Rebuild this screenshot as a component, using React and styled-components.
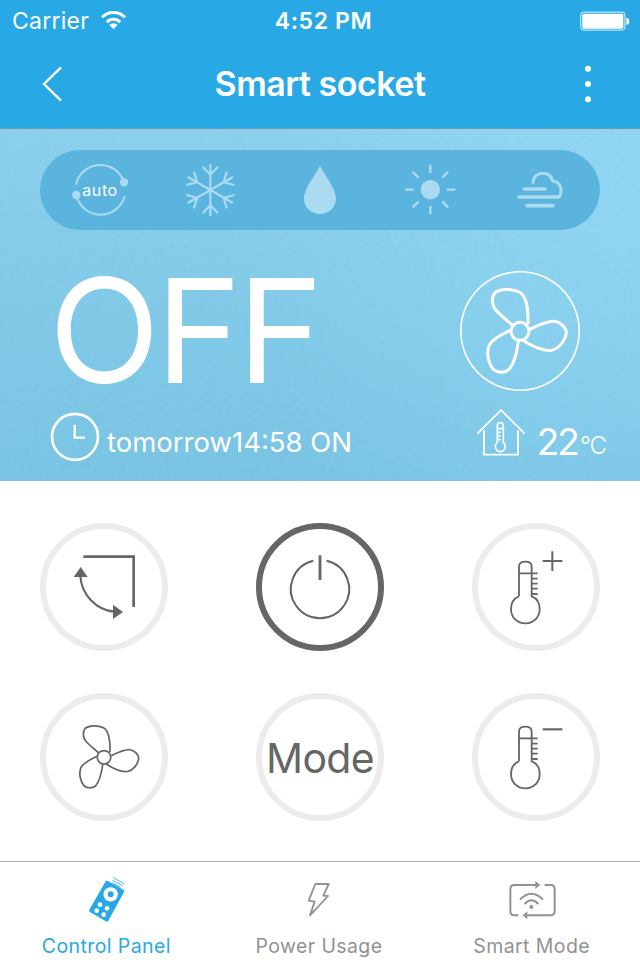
import React, { useState } from 'react';
import styled, { createGlobalStyle, ThemeProvider } from 'styled-components';

const theme = {
  blue: '#28a9e6',
  pill: '#5ab4de',
  pale: '#abdbf0',
  dark: '#666666',
  ring: '#ececec',
  gray: '#929292',
  white: '#ffffff',
};

const MODES = ['auto', 'cool', 'dry', 'heat', 'wind'];

const TABS = [
  { id: 'panel', label: 'Control Panel' },
  { id: 'usage', label: 'Power Usage' },
  { id: 'smart', label: 'Smart Mode' },
];

const FAN_BLADES =
  'M264 190 C265 140 260 105 238 93 C215 82 180 83 165 95 C154 108 155 135 168 148 C182 162 200 178 217 192 M269 205 C295 192 325 180 345 181 C364 185 379 202 379 215 C376 240 355 264 335 268 C305 272 270 252 248 238 M214 206 C180 222 155 238 148 252 C138 275 145 308 161 326 C173 336 195 336 206 326 C225 305 230 275 235 240';

const Fan = ({ size, stroke }) => (
  <Icon $size={size} viewBox="60 30 360 360" $stroke={stroke}>
    <path d={FAN_BLADES} />
    <circle cx="240" cy="211" r="27" />
  </Icon>
);

const ModeIcon = ({ type }) => {
  switch (type) {
    case 'auto':
      return (
        <Icon $size={60} viewBox="120 60 180 180" $stroke={6}>
          <path d="M138 134 A74.5 74.5 0 0 1 282 127 M139 165 A74.5 74.5 0 0 0 284 168" />
          <circle className="fill" cx="282" cy="127" r="12.5" />
          <circle className="fill" cx="139" cy="165" r="12.5" />
        </Icon>
      );
    case 'cool':
      return (
        <Icon $size={60} viewBox="450 60 180 180" $stroke={6.5}>
          {[0, 60, 120, 180, 240, 300].map(deg => (
            <path
              key={deg}
              transform={`rotate(${deg} 541 150)`}
              d="M541 150 V72 M518 80 L541 104 L564 80"
            />
          ))}
        </Icon>
      );
    case 'dry':
      return (
        <Icon $size={60} viewBox="780 60 180 180" $stroke={0}>
          <path
            className="fill"
            d="M870 77 C857 103 822 147 822 175 C822 203 843 222 870 222 C897 222 918 203 918 175 C918 147 883 103 870 77Z"
          />
        </Icon>
      );
    case 'heat':
      return (
        <Icon $size={60} viewBox="240 60 180 180" $stroke={7}>
          <circle className="fill" cx="331" cy="149" r="29" />
          <path d="M331 74 V99 M331 198 V223 M256 149 H281 M381 149 H406 M278 96 L296 113 M384 96 L367 113 M278 202 L296 184 M384 202 L367 184" />
        </Icon>
      );
    default:
      return (
        <Icon $size={60} viewBox="570 60 180 180" $stroke={11} $round>
          <path d="M613 147 H675 M597 171 H716 M621 197 H699" />
          <path
            strokeWidth="9"
            d="M639 128 C640 109 653 100 669 100 C685 100 695 110 698 123 C718 125 725 141 723 155 C722 166 719 171 714 171"
          />
        </Icon>
      );
  }
};

const Thermometer = ({ sign }) => (
  <Icon $size={116} viewBox={sign === '+' ? '39 41 348 348' : '39 56 348 348'} $stroke={5.5}>
    <path d="M162 243 V154 C162 144 170 139 181 139 C192 139 200 144 200 154 V243 C216 249 224 264 224 281 C224 307 205 324 181 324 C157 324 138 307 138 281 C138 264 147 249 162 243 M162 174 H218 M200 190 H218 M200 205 H218 M200 220 H218 M200 236 H218" />
    {sign === '+' ? (
      <path strokeWidth="6" d="M233 137 H292 M262 108 V167" />
    ) : (
      <path strokeWidth="6.5" d="M233 147 H292" />
    )}
  </Icon>
);

const Swing = () => (
  <Icon $size={116} viewBox="48 41 348 348" $stroke={8}>
    <path d="M160 124 H311 V275" />
    <path strokeWidth="6.5" d="M151 182 C155 240 200 285 252 289" />
    <path className="fill" strokeWidth="0" d="M152 155 L173 185 H131Z M279 290 L249 268 V311Z" />
  </Icon>
);

const Power = () => (
  <Icon $size={116} viewBox="51 41 348 348" $stroke={6}>
    <path d="M205 136 A87.5 87.5 0 1 0 245 136" />
    <path strokeWidth="8.5" d="M225 120 V194" />
  </Icon>
);

const TabIcon = ({ type }) => {
  if (type === 'panel') {
    return (
      <Icon $size={48} viewBox="247 63 144 144" $stroke={0}>
        <path
          className="fill"
          d="M318 79 Q321 76 325 78 L371 104 Q375 107 373 111 L326 197 Q323 202 318 199 L271 171 Q267 168 269 164Z"
        />
        <circle fill="#fff" cx="333" cy="118" r="21.5" />
        <circle className="fill" cx="333" cy="118" r="9" />
        <circle fill="#fff" cx="301" cy="149" r="7" />
        <circle fill="#fff" cx="322" cy="160" r="7" />
        <circle fill="#fff" cx="291" cy="167" r="7" />
        <circle fill="#fff" cx="312" cy="179" r="7" />
        <path strokeWidth="2.5" d="M339 67 L375 87 M339 76 L369 92 M339 84 L363 97" />
      </Icon>
    );
  }
  if (type === 'usage') {
    return (
      <Icon $size={48} viewBox="885 63 144 144" $stroke={5.5} $round>
        <path d="M946 87 H986 L970 122 L984 123 L930 181 L944 140 L926 137Z" />
      </Icon>
    );
  }
  return (
    <Icon $size={48} viewBox="563 63 144 144" $stroke={6}>
      <path d="M647 90 H582 Q570 90 570 102 V169 Q570 181 582 181 H594 M673 90 H691 Q703 90 703 102 V169 Q703 181 691 181 H618" />
      <path className="fill" strokeWidth="0" d="M645 78 L660 90 L645 102Z M621 169 L607 181 L621 193Z" />
      <path d="M599 134 Q633 99 668 134 M613 147 Q633 125 654 147" />
      <circle className="fill" strokeWidth="0" cx="633" cy="156" r="6" />
    </Icon>
  );
};

const StatusBar = () => (
  <Status>
    <Carrier>
      Carrier
      <Wifi viewBox="298 30 80 60">
        <path d="M303.7 51.7 A48.5 48.5 0 0 1 372.3 51.7 M318.2 66.2 A28 28 0 0 1 357.8 66.2" />
        <path className="wedge" d="M338 87 L325.5 75 A17 17 0 0 1 350.5 75Z" />
      </Wifi>
    </Carrier>
    <Time>4:52 PM</Time>
    <Battery viewBox="779 31 150 60">
      <rect x="781.3" y="34.3" width="132.4" height="54" rx="8" fill="none" stroke="#fff" strokeWidth="2.6" />
      <rect x="786" y="39" width="123" height="45" rx="4" />
      <path d="M918 51 Q927 52 927 62 Q927 72 918 73Z" />
    </Battery>
  </Status>
);

export default function App() {
  const [tab, setTab] = useState('panel');

  return (
    <ThemeProvider theme={theme}>
      <GlobalStyle />
      <Screen>
        <Header>
          <StatusBar />
          <Nav>
            <NavButton aria-label="Back">
              <Icon $size={40} viewBox="97 192 120 120" $stroke={7}>
                <path d="M184 202 L133 252 L184 302" />
              </Icon>
            </NavButton>
            <Title>Smart socket</Title>
            <NavButton aria-label="More">
              <Icon $size={40} viewBox="744 192 120 120" $stroke={0}>
                <circle className="fill" cx="804" cy="206" r="9" />
                <circle className="fill" cx="804" cy="252" r="9" />
                <circle className="fill" cx="804" cy="298" r="9" />
              </Icon>
            </NavButton>
          </Nav>
        </Header>

        <Hero>
          <Grain aria-hidden="true">
            <filter id="grain">
              <feTurbulence type="fractalNoise" baseFrequency="0.2" numOctaves="2" seed="4" />
              <feColorMatrix values="0 0 0 0 1  0 0 0 0 1  0 0 0 0 1  1.4 0 0 0 -0.5" />
            </filter>
            <rect width="100%" height="100%" filter="url(#grain)" />
          </Grain>
          <ModeBar>
            {MODES.map(mode => (
              <ModeCell key={mode}>
                <ModeIcon type={mode} />
                {mode === 'auto' && <AutoText>auto</AutoText>}
              </ModeCell>
            ))}
          </ModeBar>
          <StateRow>
            <State>OFF</State>
            <FanRing>
              <Fan size={120} stroke={9} />
            </FanRing>
          </StateRow>
          <InfoRow>
            <Timer>
              <Icon $size={50} viewBox="60 485 150 150" $stroke={8}>
                <circle cx="135" cy="559.5" r="69" />
                <path strokeWidth="7" d="M134 523 V562 H165" />
              </Icon>
              <TimerText>tomorrow14:58 ON</TimerText>
            </Timer>
            <Room>
              <Icon $size={50} viewBox="105 440 150 150" $stroke={5.5}>
                <path d="M109 520 L180 449 L251 520 M129 510 V583 H231 V510" />
                <path
                  strokeWidth="5"
                  d="M169 547 V496 Q169 487 178 487 Q187 487 187 496 V547 A15 15 0 1 1 169 547 M169 505 H187 M171 516 H179 M171 527 H179 M171 538 H179"
                />
              </Icon>
              <Degrees>22</Degrees>
              <Unit>°C</Unit>
            </Room>
          </InfoRow>
        </Hero>

        <Pad>
          <Key aria-label="Swing"><Swing /></Key>
          <Key aria-label="Power" $active><Power /></Key>
          <Key aria-label="Warmer"><Thermometer sign="+" /></Key>
          <Key aria-label="Fan speed"><Fan size={90} stroke={7} /></Key>
          <Key><KeyText>Mode</KeyText></Key>
          <Key aria-label="Cooler"><Thermometer sign="-" /></Key>
        </Pad>

        <TabBar>
          {TABS.map(({ id, label }) => (
            <Tab key={id} $active={tab === id} onClick={() => setTab(id)}>
              <TabIcon type={id} />
              <TabLabel>{label}</TabLabel>
            </Tab>
          ))}
        </TabBar>
      </Screen>
    </ThemeProvider>
  );
}

const GlobalStyle = createGlobalStyle`
  * {
    box-sizing: border-box;
  }
  body {
    margin: 0;
    background: #fff;
    font-family: Inter, 'Liberation Sans', sans-serif;
  }
  button {
    padding: 0;
    border: 0;
    background: none;
    color: inherit;
    font: inherit;
  }
`;

const Screen = styled.div`
  display: flex;
  flex-direction: column;
  width: 640px;
  height: 960px;
  overflow: hidden;
  white-space: nowrap;
`;

const Icon = styled.svg`
  flex: none;
  display: block;
  width: ${({ $size }) => $size}px;
  height: ${({ $size }) => $size}px;
  overflow: visible;
  fill: none;
  stroke: currentColor;
  stroke-width: ${({ $stroke }) => $stroke};
  stroke-linecap: ${({ $round }) => ($round ? 'round' : 'butt')};
  stroke-linejoin: ${({ $round }) => ($round ? 'round' : 'miter')};
  .fill {
    fill: currentColor;
    stroke: none;
  }
`;

const Header = styled.header`
  height: 129px;
  border-bottom: 1px solid #6b9cb3;
  background: ${({ theme }) => theme.blue};
  color: ${({ theme }) => theme.white};
`;

const Status = styled.div`
  display: grid;
  grid-template-columns: 1fr auto 1fr;
  align-items: center;
  height: 41px;
  padding: 0 10px 0 12px;
  font-size: 23px;
  line-height: 42px;
`;

const Carrier = styled.div`
  display: flex;
  align-items: center;
  gap: 11px;
  letter-spacing: 0.25px;
`;

const Wifi = styled.svg`
  width: 27px;
  height: 20px;
  margin-top: -2px;
  fill: none;
  stroke: #fff;
  stroke-width: 9;
  .wedge {
    fill: #fff;
    stroke: none;
  }
`;

const Time = styled.div`
  padding-left: 5px;
  font-weight: 600;
  letter-spacing: 0.6px;
`;

const Battery = styled.svg`
  justify-self: end;
  width: 50px;
  height: 20px;
  margin-top: -1px;
  fill: #fff;
`;

const Nav = styled.div`
  display: flex;
  justify-content: space-between;
  align-items: center;
  height: 86px;
  padding: 0 32px;
`;

const NavButton = styled.button`
  width: 40px;
  height: 40px;
`;

const Title = styled.h1`
  margin: 0;
  font-size: 34px;
  font-weight: 600;
  line-height: 42px;
  letter-spacing: -0.5px;
`;

const Hero = styled.section`
  position: relative;
  height: 352px;
  padding-top: 21px;
  color: ${({ theme }) => theme.white};
  background: radial-gradient(
      circle at 100% 25%,
      rgba(150, 220, 250, 0.55),
      rgba(150, 220, 250, 0) 60%
    ),
    linear-gradient(#8acfec, #78c3e3);
  > div {
    position: relative;
  }
`;

// faint paper texture under the readouts
const Grain = styled.svg`
  position: absolute;
  top: 0;
  left: 0;
  width: 100%;
  height: 100%;
  opacity: 0.05;
`;

const ModeBar = styled.div`
  display: flex;
  height: 80px;
  margin: 0 40px;
  padding: 0 5px;
  border-radius: 40px;
  background: ${({ theme }) => theme.pill};
`;

const ModeCell = styled.div`
  position: relative;
  flex: 1;
  display: flex;
  justify-content: center;
  align-items: center;
  color: ${({ theme }) => theme.pale};
`;

const AutoText = styled.span`
  position: absolute;
  inset: 0;
  color: ${({ theme }) => theme.white};
  font-size: 16px;
  line-height: 80px;
  letter-spacing: 0.6px;
  text-align: center;
`;

const StateRow = styled.div`
  display: flex;
  justify-content: space-between;
  height: 120px;
  margin-top: 41px;
  padding: 0 60px 0 49px;
`;

const State = styled.div`
  font-size: 145px;
  line-height: 120px;
  letter-spacing: -4px;
`;

const FanRing = styled.div`
  border-radius: 50%;
  box-shadow: inset 0 0 0 1.6px #fff;
`;

const InfoRow = styled.div`
  display: flex;
  justify-content: space-between;
  height: 50px;
  margin-top: 16px;
  padding: 0 34px 0 50px;
`;

const Timer = styled.div`
  display: flex;
  gap: 7px;
  padding-top: 5px;
`;

const TimerText = styled.span`
  font-size: 27.5px;
  line-height: 60px;
`;

const Room = styled.div`
  display: flex;
`;

const Degrees = styled.span`
  margin-left: 11px;
  font-size: 37px;
  font-weight: 400;
  line-height: 69px;
  letter-spacing: -2px;
`;

const Unit = styled.span`
  margin-left: 2px;
  font-size: 24px;
  font-weight: 300;
  line-height: 78px;
  letter-spacing: -1px;
`;

const Pad = styled.main`
  display: grid;
  grid-template-columns: repeat(3, 128px);
  justify-content: space-between;
  align-content: start;
  row-gap: 41.5px;
  flex: 1;
  padding: 42px 40px 0;
`;

const Key = styled.button`
  display: flex;
  justify-content: center;
  align-items: center;
  height: 128px;
  border: 6px solid
    ${({ $active, theme }) => ($active ? theme.dark : theme.ring)};
  border-radius: 50%;
  color: ${({ theme }) => theme.dark};
`;

const KeyText = styled.span`
  padding-top: 2px;
  font-size: 41px;
  letter-spacing: -0.7px;
`;

const TabBar = styled.nav`
  display: grid;
  grid-template-columns: repeat(3, 1fr);
  height: 99px;
  padding-right: 2px;
  border-top: 1px solid #acacac;
`;

const Tab = styled.button`
  display: flex;
  flex-direction: column;
  align-items: center;
  padding-top: 14px;
  color: ${({ $active, theme }) => ($active ? theme.blue : theme.gray)};
`;

const TabLabel = styled.span`
  margin-top: 10px;
  font-size: 19.5px;
  line-height: 24px;
  letter-spacing: 0.4px;
`;
